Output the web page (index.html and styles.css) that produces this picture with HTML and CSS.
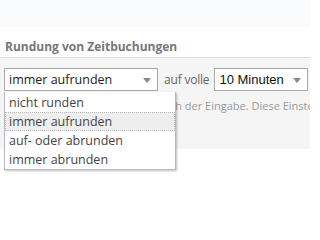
FILE: index.html
```html
<!DOCTYPE html>
<html lang="de">
<head>
<meta charset="utf-8">
<link rel="stylesheet" href="styles.css">
</head>
<body>
<div class="topbar"></div>
<h2 class="section-title">Rundung von Zeitbuchungen</h2>
<div class="panel">
  <div class="row">
    <div class="select-wrap">
      <div class="select select-main">
        <span class="select-value">immer aufrunden</span>
        <span class="arrow"></span>
      </div>
      <ul class="dropdown">
        <li class="option">nicht runden</li>
        <li class="option active">immer aufrunden</li>
        <li class="option">auf- oder abrunden</li>
        <li class="option">immer abrunden</li>
      </ul>
    </div>
    <span class="label">auf volle</span>
    <div class="select select-minutes">
      <span class="select-value">10 Minuten</span>
      <span class="arrow"></span>
    </div>
  </div>
  <div class="hint-clip">
    <p class="hint">Die Rundung erfolgt so direkt nach der Eingabe. Diese Einstellung gilt für alle Mitarbeiter.</p>
  </div>
</div>
</body>
</html>
```
FILE: styles.css
```css
* { box-sizing: border-box; }
html, body {
  margin: 0;
  padding: 0;
  background: #ffffff;
  overflow: hidden;
  width: 310px;
  height: 207px;
}
body {
  font-family: "Open Sans", "Liberation Sans", sans-serif;
  color: #333;
}
.topbar {
  height: 27px;
  background: #fafbfd;
}
.section-title {
  margin: 0;
  padding: 12px 0 0 5px;
  height: 30px;
  font-size: 12px;
  font-weight: 700;
  color: #777;
  line-height: 16px;
}
.panel {
  border-top: 1px solid #dcdcdc;
  background: #f5f5f5;
  height: 92px;
  padding: 10px 0 0 4px;
  overflow: visible;
}
.row {
  display: flex;
  align-items: center;
  white-space: nowrap;
}
.select-wrap {
  position: relative;
  flex-shrink: 0;
}
.select {
  position: relative;
  flex-shrink: 0;
  height: 23px;
  background: #fff;
  border: 1px solid #aaa;
  display: flex;
  align-items: center;
  font-size: 12.5px;
  color: #222;
}
.select-main {
  width: 154px;
  padding-left: 4px;
}
.select-minutes {
  width: 94px;
  padding-left: 4px;
  font-family: "Liberation Sans", sans-serif;
  font-size: 13px;
  color: #111;
}
.arrow {
  position: absolute;
  right: 6px;
  top: 9px;
  width: 0;
  height: 0;
  border-left: 4px solid transparent;
  border-right: 4px solid transparent;
  border-top: 5px solid #888;
}
.label {
  flex-shrink: 0;
  margin: 0 5px 0 6px;
  font-size: 12px;
  letter-spacing: -0.2px;
  color: #666;
}
.dropdown {
  position: absolute;
  left: 0;
  top: 24px;
  width: 172px;
  margin: 0;
  padding: 1px 0 0;
  list-style: none;
  background: #fff;
  border: 1px solid #b8b8c0;
  border-top: none;
  box-shadow: 1px 1px 2px rgba(0,0,0,0.25);
  z-index: 5;
}
.option {
  height: 19px;
  line-height: 19px;
  padding-left: 4px;
  font-size: 12.5px;
  color: #444;
  white-space: nowrap;
}
.option.active {
  background: #eeeeee;
  outline: 1px dotted #bbb;
  outline-offset: -1px;
}
.hint-clip {
  overflow: hidden;
}
.hint {
  margin: 7px 0 0 0;
  font-size: 11px;
  color: #9a9a9a;
  white-space: nowrap;
}
```
